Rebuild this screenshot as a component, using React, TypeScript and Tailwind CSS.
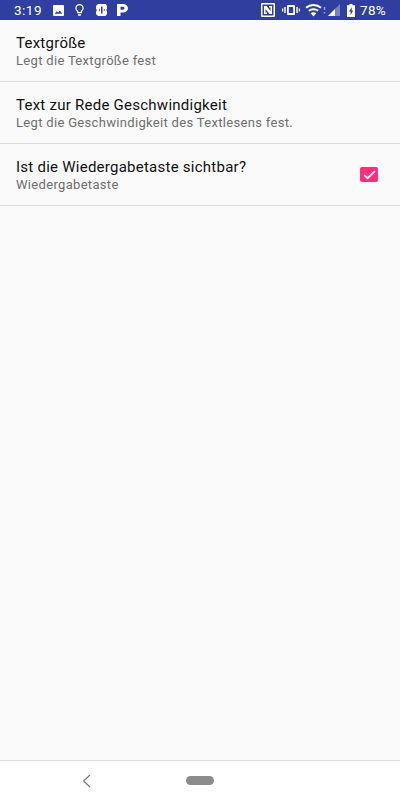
const rows = [
  { title: "Textgröße", sub: "Legt die Textgröße fest" },
  { title: "Text zur Rede Geschwindigkeit", sub: "Legt die Geschwindigkeit des Textlesens fest." },
  { title: "Ist die Wiedergabetaste sichtbar?", sub: "Wiedergabetaste", checked: true },
];

const StatusBar = () => (
  <div className="flex h-5 items-center justify-between bg-[#303f9f] pl-[14px] pr-[14px] text-white">
    <div className="flex items-center">
      <span className="w-[37px] text-[13.5px] tracking-[0.5px]">3:19</span>
      <svg width="11" height="11" viewBox="0 0 12 12" className="ml-[2px]">
        <path fill="#fff" fillRule="evenodd" d="M1 0h10a1 1 0 0 1 1 1v10a1 1 0 0 1-1 1H1a1 1 0 0 1-1-1V1a1 1 0 0 1 1-1zM2 9.500h8L7.500 6 5.500 8.200 4 6.800z" />
      </svg>
      <svg width="9" height="14" viewBox="0 0 10 14" className="ml-[11px]" fill="none" stroke="#fff" strokeWidth="1.300">
        <path d="M3 10V8.500C1.800 7.700 1 6.500 1 5a4 4 0 0 1 8 0c0 1.500-.8 2.700-2 3.500V10z" />
        <path d="M3.500 12.500h3" strokeWidth="1.800" />
      </svg>
      <svg width="13" height="14" viewBox="0 0 13 14" className="ml-[11px]">
        <path fill="#fff" fillRule="evenodd" d="M3 1h7.500L12 3v3l-.8 1 .8 1.500V11l-1.500 2H3l-2-2V8.500L2 7 1 6V3zM6 3.500v7h1.500v-7zM4.800 5.500a1.500 2 0 0 0-1 1.500 1.500 2 0 0 0 1 1.500zM8.800 5.500v3a1.500 2 0 0 0 1-1.500 1.500 2 0 0 0-1-1.500z" />
      </svg>
      <svg width="11" height="12" viewBox="0 0 11 12" className="ml-[9px]">
        <path fill="#fff" fillRule="evenodd" d="M0 0h6a5 4.250 0 0 1 0 8.500H3.500V12H0zm3.500 2.800v2.900H6a1.500 1.450 0 0 0 0-2.900z" />
      </svg>
    </div>
    <div className="flex items-center">
      <svg width="14" height="14" viewBox="0 0 14 14">
        <path fill="#fff" fillRule="evenodd" d="M1 0h12a1 1 0 0 1 1 1v12a1 1 0 0 1-1 1H1a1 1 0 0 1-1-1V1a1 1 0 0 1 1-1zm.5 1.500v11h11v-11zM3 3h2.500l4 5V4.500H8V3h3v8H8.500l-4-5v3.500H6V11H3z" />
      </svg>
      <svg width="18" height="10" viewBox="0 0 18 10" className="ml-[7px]">
        <path fill="#fff" fillRule="evenodd" d="M6 0h6a1 1 0 0 1 1 1v8a1 1 0 0 1-1 1H6a1 1 0 0 1-1-1V1a1 1 0 0 1 1-1zm.8 2v6h4.400V2z" />
        <path fill="#fff" d="M0 3.500h1.300v3H0zM2.300 2h1.400v6H2.300zM14.300 2h1.400v6h-1.400zM16.700 3.500H18v3h-1.300z" />
      </svg>
      <svg width="22" height="13" viewBox="0 0 22 13" className="ml-[5px]" fill="none">
        <path stroke="#fff" strokeWidth="2" d="M1 3.800C3.200 1.900 5.700 1 8.500 1s5.300.9 7.500 2.800" />
        <path stroke="#fff" strokeWidth="2" d="M3.800 6.800c1.300-1 2.900-1.600 4.700-1.600s3.400.6 4.700 1.600" />
        <path fill="#fff" d="M5.700 9.200c.8-.6 1.700-.9 2.800-.9s2 .3 2.800.9L8.500 12.500z" />
        <path stroke="#fff" strokeOpacity="0.5" strokeWidth="1.500" d="M19.500 3v3M19.500 8v1.500" />
      </svg>
      <svg width="12" height="12" viewBox="0 0 12 12" className="ml-[1px]">
        <path fill="#fff" fillOpacity="0.35" d="M12 0v12H0z" />
        <path fill="#fff" d="M7 5v7H0z" />
      </svg>
      <svg width="8" height="13" viewBox="0 0 8 13" className="ml-[7px]">
        <path fill="#fff" fillRule="evenodd" d="M2.500 0h3v1.300H8V13H0V1.300h2.500zM4.800 3 2 7.500h1.600V11l2.600-4.500H4.600z" />
      </svg>
      <span className="ml-[5px] text-[13.5px] tracking-[0.3px]">78%</span>
    </div>
  </div>
);

const App = () => {
  return (
    <div className="flex h-[800px] w-[400px] flex-col overflow-hidden bg-[#fafafa] font-['Roboto',sans-serif]">
      <StatusBar />
      <div className="flex-1">
        {rows.map((row) => (
          <div key={row.title} className="flex h-[62px] items-center justify-between border-b border-[#dcdcdc] pl-4 pr-[22px]">
            <div>
              <div className="text-[15px] leading-[20px] tracking-[0.25px] text-[#111111]">{row.title}</div>
              <div className="text-[13px] leading-[16px] tracking-[0.32px] text-[#6f6f6f]">{row.sub}</div>
            </div>
            {row.checked && (
              <div className="flex h-[15px] w-[18px] items-center justify-center rounded-[2px] bg-[#ff2d7e]">
                <svg width="13" height="10" viewBox="0 0 12 9" fill="none" stroke="#fff" strokeWidth="1.600">
                  <path d="M1 4.500l3.200 3L11 1" />
                </svg>
              </div>
            )}
          </div>
        ))}
      </div>
      <div className="flex h-[40px] items-center border-t border-[#dcdcdc] bg-white pl-[82px]">
        <svg width="9" height="14" viewBox="0 0 9 14" fill="none" stroke="#757575" strokeWidth="1.100">
          <path d="M8 1 1.500 7 8 13" />
        </svg>
        <div className="ml-[95px] h-[9px] w-[28px] rounded-full bg-[#8c8c8c]" />
      </div>
    </div>
  );
};

export default App;
